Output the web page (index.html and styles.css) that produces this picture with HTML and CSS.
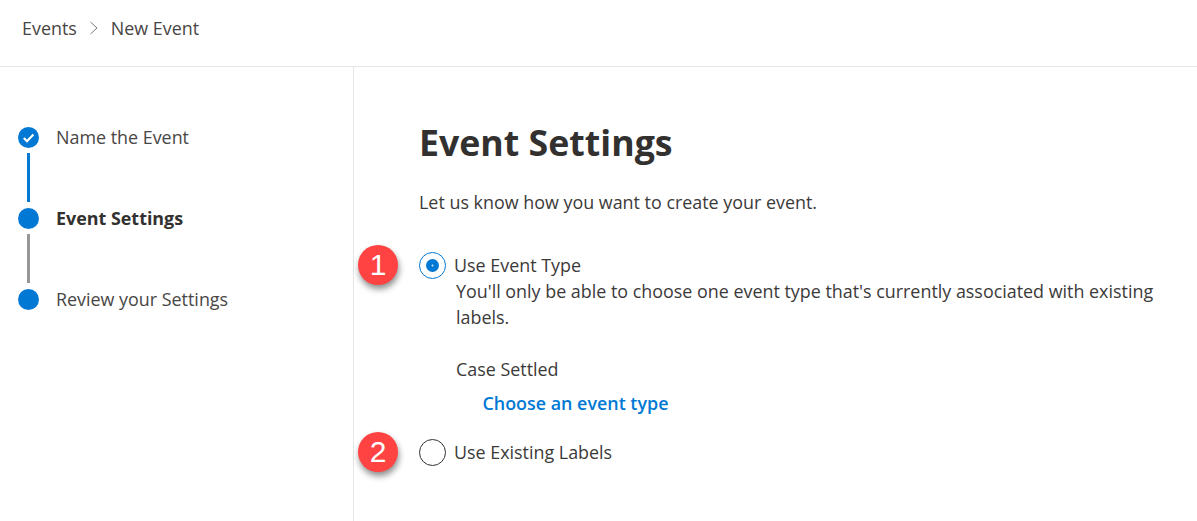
FILE: index.html
```html
<!DOCTYPE html>
<html lang="en">
<head>
  <meta charset="UTF-8">
  <title>New Event</title>
  <link rel="stylesheet" href="styles.css">
</head>
<body>
  <div class="breadcrumb">
    <span>Events</span>
    <svg class="crumb-sep" width="10" height="14" viewBox="0 0 10 14"><path d="M1.5 1 L8 7 L1.5 13" fill="none" stroke="#7a7a7a" stroke-width="1"/></svg>
    <span>New Event</span>
  </div>

  <div class="content">
    <div class="sidebar">
      <div class="step">
        <div class="step-marker">
          <div class="dot">
            <svg width="21" height="21" viewBox="0 0 21 21"><path d="M5.8 11 L9 14.2 L15.4 7.6" fill="none" stroke="#fff" stroke-width="2.2"/></svg>
          </div>
          <div class="line line-done"></div>
        </div>
        <div class="step-label">Name the Event</div>
      </div>
      <div class="step">
        <div class="step-marker">
          <div class="dot"></div>
          <div class="line line-todo"></div>
        </div>
        <div class="step-label step-current">Event Settings</div>
      </div>
      <div class="step">
        <div class="step-marker">
          <div class="dot"></div>
        </div>
        <div class="step-label">Review your Settings</div>
      </div>
    </div>

    <div class="main">
      <h1>Event Settings</h1>
      <p class="intro">Let us know how you want to create your event.</p>

      <div class="option option-first">
        <span class="badge">1</span>
        <span class="radio radio-on"><span class="radio-inner"></span></span>
        <span class="option-label">Use Event Type</span>
      </div>
      <div class="option-detail">
        <p class="desc">You'll only be able to choose one event type that's currently associated with existing labels.</p>
        <p class="chosen">Case Settled</p>
        <a class="choose-link" href="#">Choose an event type</a>
      </div>

      <div class="option">
        <span class="badge">2</span>
        <span class="radio"></span>
        <span class="option-label">Use Existing Labels</span>
      </div>
    </div>
  </div>
</body>
</html>
```

FILE: styles.css
```css
html, body {
  height: 100%;
}

body {
  margin: 0;
  display: flex;
  flex-direction: column;
  background-color: #fff;
  color: #3b3a39;
  font-family: 'Open Sans', 'Noto Sans', sans-serif;
  font-size: 17.9px;
  overflow: hidden;
}

.breadcrumb {
  height: 55px;
  padding: 0 0 11px 22px;
  display: flex;
  align-items: center;
  gap: 12px;
  flex-shrink: 0;
  color: #484644;
  border-bottom: 1px solid #e6e6e6;
}

.content {
  display: flex;
  flex: 1;
}

.sidebar {
  width: 335px;
  padding: 60px 0 0 18px;
  border-right: 1px solid #e6e6e6;
  flex-shrink: 0;
}

.step {
  display: flex;
  gap: 17px;
}

.step-marker {
  display: flex;
  flex-direction: column;
  align-items: center;
  width: 21px;
}

.dot {
  width: 21px;
  height: 21px;
  border-radius: 50%;
  background-color: #0078d4;
}

.line {
  width: 3px;
  height: 49px;
  margin: 5px 0 6px;
}

.line-done {
  background-color: #0078d4;
}

.line-todo {
  background-color: #979797;
}

.step-label {
  line-height: 21px;
  color: #484644;
}

.step-current {
  font-weight: 700;
  color: #323130;
}

.main {
  flex: 1;
  padding: 50px 30px 0 66px;
}

h1 {
  margin: 0 0 0 -1px;
  font-size: 35.7px;
  line-height: 50px;
  font-weight: 700;
  color: #323130;
}

.intro {
  margin: 23px 0 0 -1px;
  line-height: 24px;
}

.option {
  position: relative;
  display: flex;
  align-items: center;
  gap: 8px;
  height: 27px;
}

.option-first {
  margin-top: 38px;
}

.option-label {
  margin-top: -2px;
}

.badge {
  position: absolute;
  left: -62px;
  top: -7px;
  width: 40px;
  height: 40px;
  border-radius: 50%;
  background-color: #ff4343;
  color: #fff;
  font-family: 'Liberation Sans', Arial, sans-serif;
  font-size: 30px;
  line-height: 40px;
  text-align: center;
  box-shadow: 1px 4px 6px rgba(0, 0, 0, 0.45);
}

.radio {
  width: 27px;
  height: 27px;
  margin-left: -1px;
  box-sizing: border-box;
  border: 1px solid #323130;
  border-radius: 50%;
  display: flex;
  align-items: center;
  justify-content: center;
  background-color: #fff;
}

.radio-on {
  border-color: #0078d4;
}

/* tiny light spot in the middle of the selected dot */
.radio-inner {
  width: 13px;
  height: 13px;
  border-radius: 50%;
  background: radial-gradient(circle, #cfe4f7 0, #cfe4f7 0.6px, #0078d4 1.4px);
}

.option-detail {
  padding-left: 36px;
  margin: -1px 0 23px;
}

.desc {
  margin: 0;
  line-height: 26px;
}

.chosen {
  margin: 26px 0 0;
  line-height: 26px;
}

.choose-link {
  display: block;
  margin: 8px 0 0 26.5px;
  line-height: 26px;
  font-weight: 600;
  color: #0078d4;
  text-decoration: none;
}
```
